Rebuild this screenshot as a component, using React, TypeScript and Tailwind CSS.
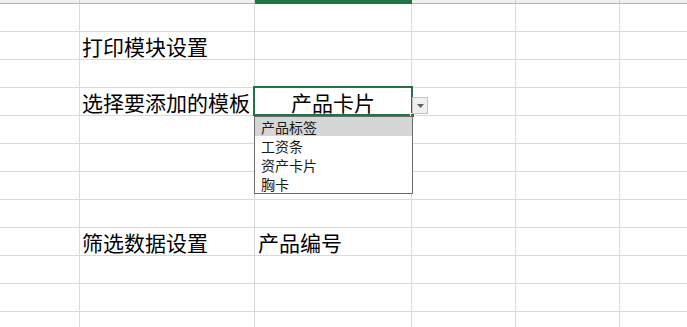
import React from "react";

const FONT = { fontFamily: '"Noto Sans CJK SC", "Noto Sans", sans-serif' };

const cols = ["w-[80px]", "w-[175px]", "w-[157px]", "w-[104px]", "w-[104px]", "w-[104px]"];

function Row({ children }: { children?: React.ReactNode }) {
  return <div className="flex h-[28px] shrink-0">{children}</div>;
}

function Cell({ w, children, className = "" }: { w: string; children?: React.ReactNode; className?: string }) {
  return (
    <div
      className={`${w} shrink-0 h-[28px] border-r border-b border-[#dadada] flex items-center pl-[2px] pt-[1px] text-[21px] leading-none text-black whitespace-nowrap ${className}`}
    >
      {children}
    </div>
  );
}

function EmptyRow() {
  return (
    <Row>
      {cols.map((c, i) => (
        <Cell key={i} w={c} />
      ))}
    </Row>
  );
}

export default function App() {
  return (
    <div className="w-[687px] h-[327px] overflow-hidden bg-white flex flex-col" style={FONT}>
      {/* header strip */}
      <div className="flex h-[4px] shrink-0">
        <div className="w-[80px] shrink-0 bg-[#f0f0f0] border-r border-b border-[#b5b5b5] border-r-[#cfcfcf]" />
        <div className="w-[175px] shrink-0 bg-[#f0f0f0] border-r border-b border-[#b5b5b5] border-r-[#cfcfcf]" />
        <div className="w-[157px] shrink-0 bg-[#217346]" />
        <div className="w-[104px] shrink-0 bg-[#f0f0f0] border-r border-b border-[#b5b5b5] border-r-[#cfcfcf]" />
        <div className="w-[104px] shrink-0 bg-[#f0f0f0] border-r border-b border-[#b5b5b5] border-r-[#cfcfcf]" />
        <div className="w-[104px] shrink-0 bg-[#f0f0f0] border-b border-[#b5b5b5]" />
      </div>

      <EmptyRow />
      <Row>
        <Cell w={cols[0]} />
        <Cell w={cols[1]} className="overflow-visible">打印模块设置</Cell>
        <Cell w={cols[2]} />
        <Cell w={cols[3]} />
        <Cell w={cols[4]} />
        <Cell w={cols[5]} />
      </Row>
      <EmptyRow />
      <Row>
        <Cell w={cols[0]} />
        <Cell w={cols[1]}>选择要添加的模板</Cell>
        <div className="w-[157px] shrink-0 h-[28px] border-r border-b border-[#dadada] relative z-10">
          <div className="absolute left-[-2px] top-[-2px] right-[-2px] bottom-[-1px] border-2 border-[#217346]" />
          <div className="absolute inset-0 flex items-center justify-center pt-[1px] text-[21px] leading-none text-black">
            产品卡片
          </div>
          {/* fill handle */}
          <div className="absolute right-[-4px] bottom-[-3px] w-[5px] h-[5px] bg-[#217346] border border-white" />
          {/* dropdown button */}
          <div className="absolute left-[157px] top-[9px] w-[16px] h-[17px] bg-[#f0f0f0] border border-[#c2c2c2] flex items-center justify-center">
            <svg width="7" height="4" viewBox="0 0 7 4">
              <polygon points="0,0 7,0 3.5,4" fill="#606060" />
            </svg>
          </div>
          {/* dropdown list */}
          <div className="absolute left-[-1px] top-[28px] w-[159px] h-[78px] bg-white border border-[#6b6b6b] flex flex-col text-[14px] leading-none text-[#1a1a1a]">
            <div className="h-[19px] bg-[#d6d6d6] flex items-center pl-[6px]">产品标签</div>
            <div className="h-[19px] flex items-center pl-[6px]">工资条</div>
            <div className="h-[19px] flex items-center pl-[6px]">资产卡片</div>
            <div className="h-[19px] flex items-center pl-[6px]">胸卡</div>
          </div>
        </div>
        <Cell w={cols[3]} />
        <Cell w={cols[4]} />
        <Cell w={cols[5]} />
      </Row>
      <EmptyRow />
      <EmptyRow />
      <EmptyRow />
      <EmptyRow />
      <Row>
        <Cell w={cols[0]} />
        <Cell w={cols[1]}>筛选数据设置</Cell>
        <Cell w={cols[2]} className="pl-[3px]">产品编号</Cell>
        <Cell w={cols[3]} />
        <Cell w={cols[4]} />
        <Cell w={cols[5]} />
      </Row>
      <EmptyRow />
      <EmptyRow />
      <EmptyRow />
    </div>
  );
}
